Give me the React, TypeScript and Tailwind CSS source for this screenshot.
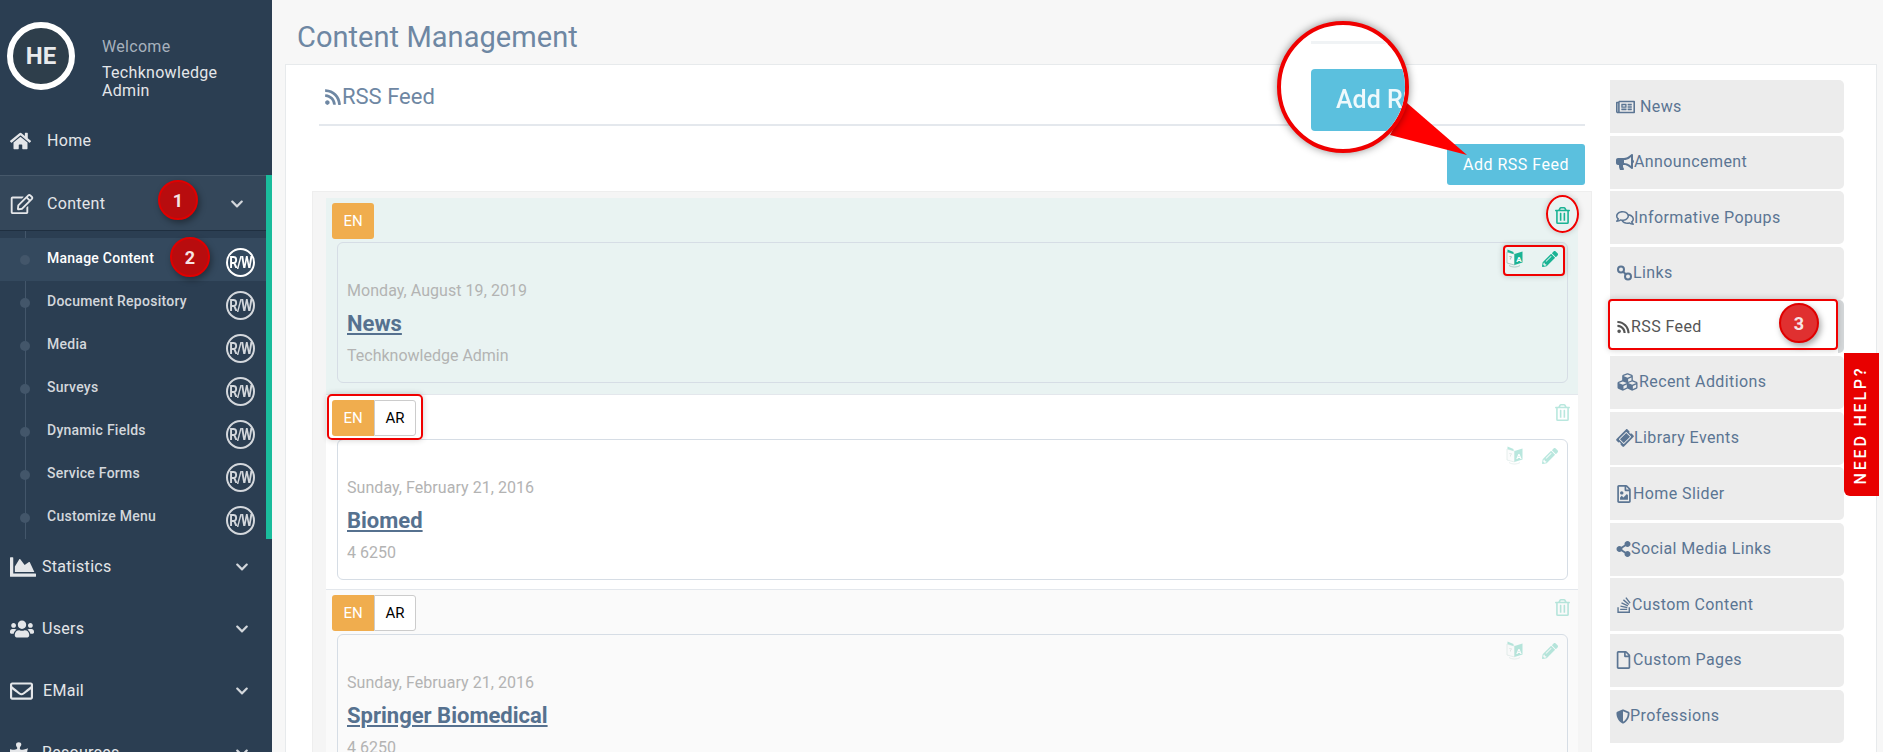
import type { ReactNode } from "react";
import {
  FaBullhorn,
  FaChartArea,
  FaChevronDown,
  FaCubes,
  FaHome,
  FaPencilAlt,
  FaPuzzlePiece,
  FaRegComments,
  FaRegEdit,
  FaRegEnvelope,
  FaRegFile,
  FaRegFileImage,
  FaRegNewspaper,
  FaRegTrashAlt,
  FaRss,
  FaShareAlt,
  FaShieldAlt,
  FaStackOverflow,
  FaTicketAlt,
  FaUsers,
} from "react-icons/fa";

const SUB_ITEMS = ["Manage Content", "Document Repository", "Media", "Surveys", "Dynamic Fields", "Service Forms", "Customize Menu"];

const NAV_ITEMS: { label: string; icon: ReactNode }[] = [
  { label: "Statistics", icon: <FaChartArea className="mr-[6px] h-[26px] w-[26px]" /> },
  { label: "Users", icon: <FaUsers className="mr-[8px] h-[26px] w-[24px]" /> },
  { label: "EMail", icon: <FaRegEnvelope className="mr-[10px] h-[24px] w-[23px]" /> },
  { label: "Resources", icon: <FaPuzzlePiece className="mr-[8px] h-[24px] w-[24px]" /> },
];

const TABS: { label: string; icon: ReactNode; active?: boolean }[] = [
  { label: "News", icon: <FaRegNewspaper className="mr-[5px] h-[18px] w-[19px]" /> },
  { label: "Announcement", icon: <FaBullhorn className="h-[18px] w-[18px]" /> },
  { label: "Informative Popups", icon: <FaRegComments className="h-[18px] w-[18px]" /> },
  { label: "Links", icon: <LinksIcon /> },
  { label: "RSS Feed", icon: <FaRss className="h-[14px] w-[15px]" />, active: true },
  { label: "Recent Additions", icon: <FaCubes className="h-[20px] w-[23px]" /> },
  { label: "Library Events", icon: <FaTicketAlt className="mx-[1px] h-[16px] w-[16px] -rotate-45" /> },
  { label: "Home Slider", icon: <FaRegFileImage className="mr-[1px] h-[18px] w-[16px]" /> },
  { label: "Social Media Links", icon: <FaShareAlt className="h-[16px] w-[15px]" /> },
  { label: "Custom Content", icon: <FaStackOverflow className="h-[18px] w-[16px]" /> },
  { label: "Custom Pages", icon: <FaRegFile className="mr-[2px] h-[18px] w-[15px]" /> },
  { label: "Professions", icon: <FaShieldAlt className="h-[17px] w-[14px]" /> },
];

function LinksIcon() {
  return (
    <svg viewBox="0 0 16 16" className="h-[16px] w-[17px]" fill="none" stroke="currentColor" strokeWidth="2">
      <circle cx="4.5" cy="4.5" r="3" />
      <circle cx="11.5" cy="11.5" r="3" />
      <path d="M6.5 6.5l3 3" />
    </svg>
  );
}

function TranslateIcon() {
  return (
    <svg viewBox="0 0 18 19" className="h-[19px] w-[18px]">
      <path d="M1 3l7.5 2v11l-7.5-2z" fill="#f4f8f7" stroke="#8fb8b0" strokeWidth="0.7" />
      <path d="M8.5 5l8-2.5v11l-8 2.5z" fill="#1ab394" />
      <path d="M1.5 0.5l6 2.5v2l-6-2z" fill="#1ab394" />
      <text x="10.2" y="12.5" fontSize="8" fontWeight="700" fill="#ffffff" fontFamily="Roboto, sans-serif">A</text>
      <text x="3" y="11" fontSize="6" fill="#6b8f88" fontFamily="Roboto, sans-serif">?</text>
      <path d="M3 16.5c3 2 8 2 11 0" fill="none" stroke="#8fb8b0" strokeWidth="0.7" />
    </svg>
  );
}

function RwBadge({ bright }: { bright?: boolean }) {
  return (
    <div className={`flex h-[29px] w-[29px] items-center justify-center rounded-full border-2 ${bright ? "border-white text-white" : "border-[#d3d7dc] text-[#d3d7dc]"}`}>
      <span className="scale-x-[0.78] text-[17px] leading-none font-bold tracking-[-1px]">R/W</span>
    </div>
  );
}

function Badge({ n, className }: { n: number; className: string }) {
  return (
    <div className={`absolute flex h-[40px] w-[40px] items-center justify-center rounded-full border-2 border-[#e00000] text-[18px] font-bold text-[#f6e4e4] shadow-[2px_3px_6px_rgba(0,0,0,0.35)] ${className}`}>
      {n}
    </div>
  );
}

function LangButtons({ ar }: { ar?: boolean }) {
  return (
    <div className="flex h-[36px] text-[15px]">
      <div className={`flex w-[42px] items-center justify-center bg-[#f0ad4e] text-white ${ar ? "rounded-l-[3px]" : "rounded-[3px]"}`}>EN</div>
      {ar && <div className="flex w-[42px] items-center justify-center rounded-r-[3px] border border-[#ccc] bg-white text-black">AR</div>}
    </div>
  );
}

function FeedRow({ bg, date, title, author, ar, faded, pad }: { bg: string; date: string; title: string; author: string; ar?: boolean; faded?: boolean; pad: string }) {
  return (
    <div className={`border-b border-[#e3e7ec] px-[5px] pt-[5px] ${bg} ${pad}`}>
      <div className="relative pl-[1px]">
        <LangButtons ar={ar} />
        <FaRegTrashAlt className={`absolute top-[4px] right-[3px] h-[17px] w-[15px] text-[#1ab394] ${faded ? "opacity-30" : ""}`} />
      </div>
      <div className="relative mt-[3px] ml-[6px] h-[141px] w-[1231px] rounded-[6px] border border-[#d6dde5] pt-[37px] pl-[9px]">
        <div className={`absolute top-[6px] right-[9px] flex items-center gap-[18px] text-[#1ab394] ${faded ? "opacity-30" : ""}`}>
          <TranslateIcon />
          <FaPencilAlt className="h-[16px] w-[16px]" />
        </div>
        <p className="text-[16px] leading-[22px] tracking-[0.05px] text-[#b3b3b3]">{date}</p>
        <p className="mt-[9px] text-[22px] leading-[26px] font-bold text-[#56718f] underline">{title}</p>
        <p className="mt-[8px] text-[16px] leading-[22px] text-[#b3b3b3]">{author}</p>
      </div>
    </div>
  );
}

export default function App() {
  return (
    <div className="relative flex h-[752px] w-[1883px] overflow-hidden bg-[#f7f7f7] font-['Roboto',sans-serif]">
      {/* Sidebar */}
      <aside className="h-full w-[272px] shrink-0 bg-[#2b3e52] text-[16px] tracking-[0.3px] text-[#e4e6e9]">
        <div className="flex h-[110px] items-start pt-[22px] pl-[7px]">
          <div className="flex h-[68px] w-[68px] items-center justify-center rounded-full border-[6px] border-white bg-[#2e3e4b] text-[24px] font-bold tracking-normal text-[#e9eaec]">HE</div>
          <div className="ml-[27px] pt-[16px] leading-[18px]">
            <p className="text-[#a7b1bd]">Welcome</p>
            <p className="mt-[8px] w-[130px]">Techknowledge Admin</p>
          </div>
        </div>
        <div className="flex h-[65px] items-center pb-[4px] pl-[10px]">
          <FaHome className="mr-[16px] h-[20px] w-[21px]" />
          Home
        </div>
        <div className="border-r-[6px] border-[#1abc9c]">
          <div className="flex h-[56px] items-center border-y border-t-[#46586a] border-b-[#1f2f40] bg-[#34475a] pt-[1px] pl-[10px]">
            <FaRegEdit className="mr-[13px] h-[20px] w-[24px]" />
            Content
            <FaChevronDown className="mr-[21px] ml-auto h-[14px] w-[16px] text-[#d3d7dc]" />
          </div>
          <ul className="relative pt-[7px] text-[14px] font-medium tracking-[0.25px]">
            <div className="absolute top-0 bottom-0 left-[25px] w-px bg-[#43566a]" />
            {SUB_ITEMS.map((item, i) => (
              <li key={item} className={`relative flex h-[43px] items-center pl-[47px] ${i === 0 ? "h-[42px] bg-[#34495e] text-white" : "text-[#d3d7dc]"}`}>
                <span className="absolute top-[17px] left-[20px] h-[10px] w-[10px] rounded-full bg-[#43566a]" />
                <span className="-mt-[3px]">{item}</span>
                <div className="absolute top-[10px] right-[11px]">
                  <RwBadge bright={i === 0} />
                </div>
              </li>
            ))}
          </ul>
        </div>
        {NAV_ITEMS.map((item) => (
          <div key={item.label} className="flex h-[62px] items-center pb-[6px] pl-[10px]">
            {item.icon}
            {item.label}
            <FaChevronDown className="mr-[22px] ml-auto h-[14px] w-[16px] text-[#d3d7dc]" />
          </div>
        ))}
      </aside>

      {/* Main */}
      <main className="min-w-0 flex-1 pr-[6px] pl-[13px]">
        <h1 className="flex h-[64px] items-center pt-[10px] pl-[12px] text-[29px] leading-none tracking-[0.05px] text-[#6e87a3]">Content Management</h1>
        <div className="flex h-[700px] border border-[#e7eaec] bg-white pt-[15px] pl-[26px]">
          <div className="w-[1280px] shrink-0">
            <div className="mx-[7px] h-[46px] border-b-2 border-[#e4e8ed]">
              <div className="flex items-center pt-[3px] pl-[5px] text-[22px] leading-[28px] text-[#6e87a3]">
                <FaRss className="h-[18px] w-[18px]" />
                RSS Feed
              </div>
            </div>
            <div className="mx-[7px] flex justify-end pt-[18px] pb-[6px]">
              <div className="flex h-[41px] w-[138px] items-center justify-center rounded-[3px] bg-[#5bc0de] text-[16px] tracking-[0.5px] text-white">Add RSS Feed</div>
            </div>
            <div className="border border-[#eeeeee] bg-[#f5f5f5] px-[13px] pt-[6px]">
              <FeedRow bg="bg-[#e9f3f2]" pad="pb-[11px]" date="Monday, August 19, 2019" title="News" author="Techknowledge Admin" />
              <FeedRow bg="bg-white" pad="pb-[9px]" date="Sunday, February 21, 2016" title="Biomed" author="4 6250" ar faded />
              <FeedRow bg="bg-[#fafafa]" pad="" date="Sunday, February 21, 2016" title="Springer Biomedical" author="4 6250" ar faded />
            </div>
          </div>
          <nav className="ml-[18px] w-[234px] shrink-0 text-[16px] tracking-[0.4px] text-[#5b7593]">
            {TABS.map((tab) => (
              <div
                key={tab.label}
                className={`mb-[2.6px] flex h-[53px] items-center rounded-r-[5px] pl-[6px] ${tab.active ? "-mt-[2px] border-r-[6px] border-[#d5d8da] bg-white text-[#555]" : "bg-[#ececec]"}`}
              >
                {tab.icon}
                {tab.label}
              </div>
            ))}
          </nav>
        </div>
      </main>

      {/* Need help tab */}
      <div className="absolute top-[353px] left-[1844px] flex h-[143px] w-[35px] items-center justify-center rounded-bl-[6px] bg-[#e80000]">
        <span className="-rotate-90 text-[16px] font-medium tracking-[2.8px] whitespace-nowrap text-white">NEED HELP?</span>
      </div>

      {/* Tutorial annotations */}
      <Badge n={1} className="top-[180px] left-[158px] bg-[#b80c0e]" />
      <Badge n={2} className="top-[237px] left-[170px] bg-[#b80c0e]" />
      <Badge n={3} className="top-[303px] left-[1779px] bg-[#e03030]" />
      <div className="absolute top-[299px] left-[1608px] h-[51px] w-[230px] rounded-[4px] border-2 border-[#f00000] shadow-[0_0_6px_rgba(0,0,0,0.2)]" />
      <div className="absolute top-[195px] left-[1546px] h-[38px] w-[33px] rounded-[50%] border-2 border-[#f00000] shadow-[0_0_6px_rgba(0,0,0,0.2)]" />
      <div className="absolute top-[245px] left-[1503px] h-[31px] w-[62px] rounded-[4px] border-2 border-[#f00000] shadow-[0_0_6px_rgba(0,0,0,0.2)]" />
      <div className="absolute top-[394px] left-[327px] h-[46px] w-[96px] rounded-[5px] border-2 border-[#f00000] shadow-[0_0_6px_rgba(0,0,0,0.2)]" />
      <svg className="absolute top-[100px] left-[1385px] h-[60px] w-[90px]" viewBox="0 0 90 60">
        <path d="M22 3L5 35L82 55z" fill="#ff0000" />
      </svg>
      <div className="absolute top-[21px] left-[1277px] h-[132px] w-[132px] overflow-hidden rounded-full border-[4px] border-[#f00000] bg-white shadow-[0_0_8px_rgba(0,0,0,0.45)]">
        <div className="absolute top-[16px] left-[30px] h-[3px] w-[100px] bg-[#f0f3f5]" />
        <div className="absolute top-[44px] left-[30px] flex h-[62px] w-[140px] items-center rounded-[4px] bg-[#5bc0de] pl-[25px] text-[25px] font-medium whitespace-nowrap text-[#eef9fc] blur-[0.4px]">Add RSS</div>
      </div>
    </div>
  );
}
